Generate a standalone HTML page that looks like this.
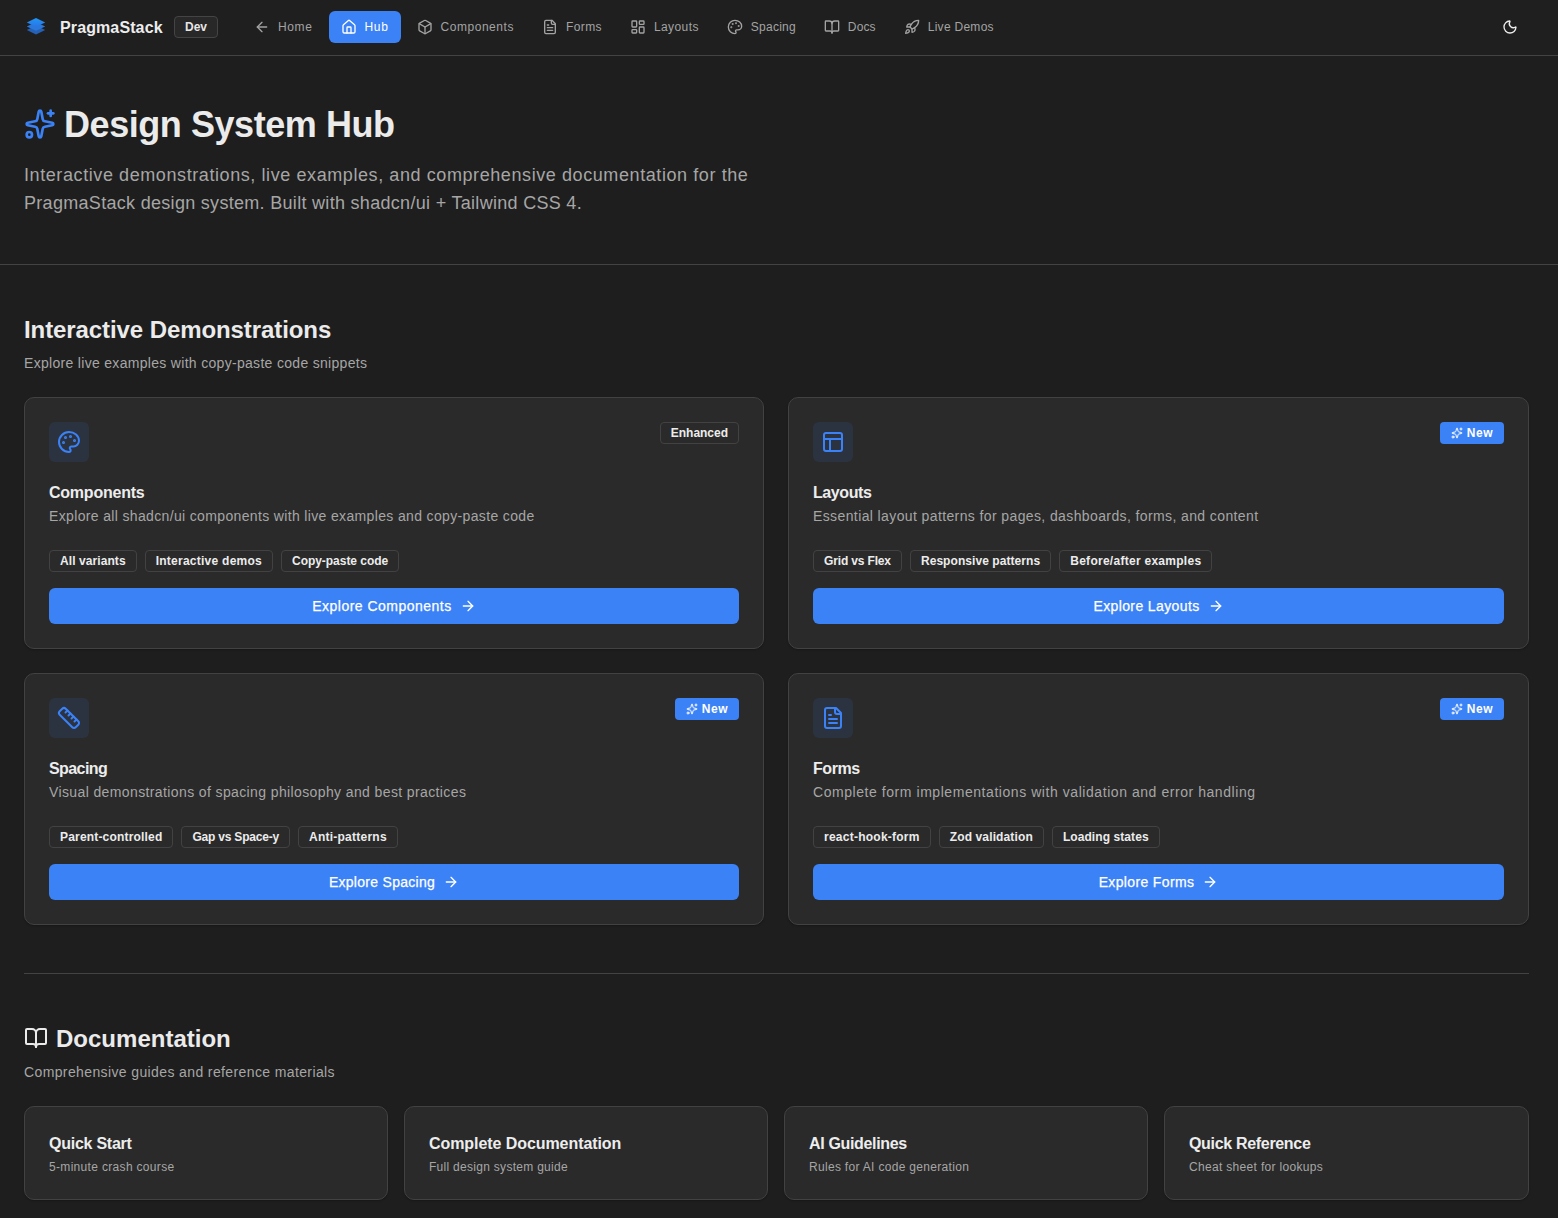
<!DOCTYPE html>
<html><head><meta charset="utf-8">
<style>
*{box-sizing:border-box;margin:0;padding:0}
html,body{width:1558px;height:1218px;overflow:hidden;background:#1e1e1e}
body{font-family:"Liberation Sans",sans-serif;color:#ececec;position:relative}
.t{white-space:nowrap;display:inline-block}
svg.i{display:block;fill:none;stroke:currentColor;stroke-width:2;stroke-linecap:round;stroke-linejoin:round}
.abs{position:absolute}
/* header */
.hdr{position:absolute;left:0;top:0;width:1558px;height:56px;border-bottom:1px solid #434343;background:#1f1f1f}
.brand{position:absolute;left:60px;top:15px;font-size:16px;font-weight:600;line-height:24px;color:#ededed}
.dev{position:absolute;left:174px;top:16px;width:44px;height:22px;border:1px solid #444;border-radius:4px;background:#282828;display:flex;align-items:center;justify-content:center}
.dev .t{font-size:12px;font-weight:600;line-height:16px;color:#e6e6e6}
.nav{position:absolute;left:242px;top:11px;height:32px;display:flex;gap:4px}
.ni{display:flex;align-items:center;gap:8px;height:32px;padding:0 12px;border-radius:6px;color:#a3a3a3}
.ni .t{font-size:12px;font-weight:500;line-height:16px}
.ni.on{background:#3b82f6;color:#fff}
.moon{position:absolute;left:1502px;top:19px;color:#ececec}
/* hero */
.hero{position:absolute;left:0;top:56px;width:1558px;height:209px;border-bottom:1px solid #434343}
.h1row{position:absolute;left:24px;top:48px;height:40px;display:flex;align-items:center;gap:8px}
.h1row svg{color:#3b82f6}
.h1{font-size:36px;font-weight:700;line-height:40px;letter-spacing:-0.025em;color:#ebebeb}
.lead{position:absolute;left:24px;top:104px;font-size:18px;line-height:28px;color:#a6a6a6}
/* sections */
.sec-h{position:absolute;left:24px;font-size:24px;font-weight:600;line-height:32px;letter-spacing:-0.025em;color:#ebebeb}
.sec-p{position:absolute;left:24px;font-size:14px;line-height:20px;color:#a6a6a6}
.card{position:absolute;width:741px;height:252px;border:1px solid #424242;border-radius:10px;background:#2a2a2a;box-shadow:0 1px 2px rgba(0,0,0,.25)}
.card .ib{position:absolute;left:24px;top:24px;width:40px;height:40px;border-radius:6px;background:#2c3340;padding:8px;color:#3b82f6}
.card .bdg{position:absolute;right:24px;top:24px;height:22px;border-radius:4px;display:flex;align-items:center;gap:4px;padding:0 10px}
.bdg .t{font-size:12px;font-weight:600;line-height:16px}
.bdg.out{border:1px solid #424242;color:#ececec}
.bdg.new{background:#3b82f6;color:#fff;border:1px solid transparent}
.card .ttl{position:absolute;left:24px;top:80px;font-size:16px;font-weight:600;line-height:28px;letter-spacing:-0.025em;color:#ededed}
.card .dsc{position:absolute;left:24px;top:108px;font-size:14px;line-height:20px;color:#a6a6a6}
.card .tags{position:absolute;left:24px;top:152px;display:flex;gap:8px}
.tag{height:22px;border:1px solid #424242;border-radius:4px;padding:0 10px;display:flex;align-items:center;color:#ececec}
.tag .t{font-size:12px;font-weight:600;line-height:16px}
.card .btn{position:absolute;left:24px;top:190px;width:690px;height:36px;border-radius:6px;background:#3b82f6;color:#fff;display:flex;align-items:center;justify-content:center;gap:8px}
.btn .t{font-size:14px;font-weight:500;line-height:20px;-webkit-text-stroke:0.25px currentColor}
.sep{position:absolute;left:24px;top:973px;width:1505px;height:1px;background:#434343}
.dcard{position:absolute;top:1106px;width:364px;height:94px;border:1px solid #424242;border-radius:10px;background:#2a2a2a;box-shadow:0 1px 2px rgba(0,0,0,.25)}
.dcard .ttl{position:absolute;left:24px;top:24px;font-size:16px;font-weight:600;line-height:24px;letter-spacing:-0.025em;color:#ededed}
.dcard .dsc{position:absolute;left:24px;top:52px;font-size:12px;line-height:16px;color:#a6a6a6}
</style></head><body>

<div class="hdr">
  <svg class="abs" style="left:24px;top:14px" width="24" height="24" viewBox="0 0 24 24">
    <defs><linearGradient id="lg" x1="0" y1="0" x2="0" y2="1"><stop offset="0" stop-color="#1f97f6"></stop><stop offset="1" stop-color="#2a74e6"></stop></linearGradient></defs>
    <path d="M12 11.5 21.2 16 12 20.4 2.8 16Z" fill="#2660b4"></path>
    <path d="M12 7.9 21.2 12.4 12 16.8 2.8 12.4Z" fill="#2a78dc"></path>
    <path d="M12 3.9 21.2 8.4 12 12.8 2.8 8.4Z" fill="url(#lg)"></path>
  </svg>
  <span class="brand t" style="letter-spacing: 0.115px; transform: translateY(1px);">PragmaStack</span>
  <div class="dev"><span class="t" style="letter-spacing: 0.042px;">Dev</span></div>
  <div class="nav">
    <div class="ni"><svg class="i" width="16" height="16" viewBox="0 0 24 24"><path d="m12 19-7-7 7-7"></path><path d="M19 12H5"></path></svg><span class="t" style="letter-spacing: 0.637px;">Home</span></div>
    <div class="ni on"><svg class="i" width="16" height="16" viewBox="0 0 24 24"><path d="M15 21v-8a1 1 0 0 0-1-1h-4a1 1 0 0 0-1 1v8"></path><path d="M3 10a2 2 0 0 1 .709-1.528l7-5.999a2 2 0 0 1 2.582 0l7 5.999A2 2 0 0 1 21 10v9a2 2 0 0 1-2 2H5a2 2 0 0 1-2-2z"></path></svg><span class="t" style="letter-spacing: 0.646px;">Hub</span></div>
    <div class="ni"><svg class="i" width="16" height="16" viewBox="0 0 24 24"><path d="M21 8a2 2 0 0 0-1-1.730l-7-4a2 2 0 0 0-2 0l-7 4A2 2 0 0 0 3 8v8a2 2 0 0 0 1 1.73l7 4a2 2 0 0 0 2 0l7-4A2 2 0 0 0 21 16Z"></path><path d="m3.3 7 8.7 5 8.7-5"></path><path d="M12 22V12"></path></svg><span class="t" style="letter-spacing: 0.541px;">Components</span></div>
    <div class="ni"><svg class="i" width="16" height="16" viewBox="0 0 24 24"><path d="M15 2H6a2 2 0 0 0-2 2v16a2 2 0 0 0 2 2h12a2 2 0 0 0 2-2V7Z"></path><path d="M14 2v4a2 2 0 0 0 2 2h4"></path><path d="M10 9H8"></path><path d="M16 13H8"></path><path d="M16 17H8"></path></svg><span class="t" style="letter-spacing: 0.391px;">Forms</span></div>
    <div class="ni"><svg class="i" width="16" height="16" viewBox="0 0 24 24"><rect width="7" height="9" x="3" y="3" rx="1"></rect><rect width="7" height="5" x="14" y="3" rx="1"></rect><rect width="7" height="9" x="14" y="12" rx="1"></rect><rect width="7" height="5" x="3" y="16" rx="1"></rect></svg><span class="t" style="letter-spacing: 0.411px;">Layouts</span></div>
    <div class="ni"><svg class="i" width="16" height="16" viewBox="0 0 24 24"><circle cx="13.5" cy="6.5" r=".5" fill="currentColor"></circle><circle cx="17.5" cy="10.5" r=".5" fill="currentColor"></circle><circle cx="8.5" cy="7.5" r=".5" fill="currentColor"></circle><circle cx="6.5" cy="12.5" r=".5" fill="currentColor"></circle><path d="M12 2C6.5 2 2 6.5 2 12s4.5 10 10 10c.926 0 1.648-.746 1.648-1.688 0-.437-.18-.835-.437-1.125-.29-.289-.438-.652-.438-1.125a1.64 1.64 0 0 1 1.668-1.668h1.996c3.051 0 5.555-2.503 5.555-5.554C21.965 6.012 17.461 2 12 2z"></path></svg><span class="t" style="letter-spacing: 0.234px;">Spacing</span></div>
    <div class="ni"><svg class="i" width="16" height="16" viewBox="0 0 24 24"><path d="M12 7v14"></path><path d="M3 18a1 1 0 0 1-1-1V4a1 1 0 0 1 1-1h5a4 4 0 0 1 4 4 4 4 0 0 1 4-4h5a1 1 0 0 1 1 1v13a1 1 0 0 1-1 1h-6a3 3 0 0 0-3 3 3 3 0 0 0-3-3z"></path></svg><span class="t" style="letter-spacing: 0.125px;">Docs</span></div>
    <div class="ni"><svg class="i" width="16" height="16" viewBox="0 0 24 24"><path d="M4.5 16.5c-1.5 1.26-2 5-2 5s3.740-.5 5-2c.71-.84.7-2.13-.09-2.91a2.18 2.18 0 0 0-2.91-.09z"></path><path d="m12 15-3-3a22 22 0 0 1 2-3.95A12.88 12.88 0 0 1 22 2c0 2.72-.78 7.5-6 11a22.35 22.35 0 0 1-4 2z"></path><path d="M9 12H4s.55-3.03 2-4c1.62-1.08 5 0 5 0"></path><path d="M12 15v5s3.03-.55 4-2c1.08-1.62 0-5 0-5"></path></svg><span class="t" style="letter-spacing: 0.281px;">Live Demos</span></div>
  </div>
  <svg class="i moon" width="16" height="16" viewBox="0 0 24 24"><path d="M20.985 12.486a9 9 0 1 1-9.473-9.472c.405-.022.617.46.402.803a6 6 0 0 0 8.268 8.268c.344-.215.825-.004.803.401"></path></svg>
</div>

<div class="hero">
  <div class="h1row">
    <svg class="i" width="32" height="32" viewBox="0 0 24 24"><path d="M11.017 2.814a1 1 0 0 1 1.966 0l1.051 5.558a2 2 0 0 0 1.594 1.594l5.558 1.051a1 1 0 0 1 0 1.966l-5.558 1.051a2 2 0 0 0-1.594 1.594l-1.051 5.558a1 1 0 0 1-1.966 0l-1.051-5.558a2 2 0 0 0-1.594-1.594l-5.558-1.051a1 1 0 0 1 0-1.966l5.558-1.051a2 2 0 0 0 1.594-1.594z"></path><path d="M20 2v4"></path><path d="M22 4h-4"></path><circle cx="4" cy="20" r="2"></circle></svg>
    <span class="t h1" style="letter-spacing: -0.439px; transform: translateY(1px);">Design System Hub</span>
  </div>
  <div class="lead"><div><span class="t" style="letter-spacing: 0.586px; transform: translateY(1px);">Interactive demonstrations, live examples, and comprehensive documentation for the</span></div><div><span class="t" style="letter-spacing: 0.301px; transform: translateY(1px);">PragmaStack design system. Built with shadcn/ui + Tailwind CSS 4.</span></div></div>
</div>

<span class="t sec-h" style="top: 313px; letter-spacing: -0.087px; transform: translateY(1px);">Interactive Demonstrations</span>
<span class="t sec-p" style="top: 353px; letter-spacing: 0.307px;">Explore live examples with copy-paste code snippets</span>

<div class="card" style="left:24px;top:397px;width:740px">
  <div class="ib"><svg class="i" width="24" height="24" viewBox="0 0 24 24"><circle cx="13.5" cy="6.5" r=".5" fill="currentColor"></circle><circle cx="17.5" cy="10.5" r=".5" fill="currentColor"></circle><circle cx="8.5" cy="7.5" r=".5" fill="currentColor"></circle><circle cx="6.5" cy="12.5" r=".5" fill="currentColor"></circle><path d="M12 2C6.5 2 2 6.5 2 12s4.5 10 10 10c.926 0 1.648-.746 1.648-1.688 0-.437-.18-.835-.437-1.125-.29-.289-.438-.652-.438-1.125a1.64 1.64 0 0 1 1.668-1.668h1.996c3.051 0 5.555-2.503 5.555-5.554C21.965 6.012 17.461 2 12 2z"></path></svg></div>
  <div class="bdg out"><span class="t" style="letter-spacing: -0.014px;">Enhanced</span></div>
  <span class="t ttl" style="letter-spacing: -0.228px; transform: translateY(1px);">Components</span>
  <span class="t dsc" style="letter-spacing: 0.35px;">Explore all shadcn/ui components with live examples and copy-paste code</span>
  <div class="tags"><div class="tag"><span class="t" style="letter-spacing: 0.078px;">All variants</span></div><div class="tag"><span class="t" style="letter-spacing: 0.254px;">Interactive demos</span></div><div class="tag"><span class="t" style="letter-spacing: -0.034px;">Copy-paste code</span></div></div>
  <div class="btn" style="width:auto;right:24px"><span class="t" style="letter-spacing: 0.483px;">Explore Components</span><svg class="i" width="16" height="16" viewBox="0 0 24 24"><path d="M5 12h14"></path><path d="m12 5 7 7-7 7"></path></svg></div>
</div>
<div class="card" style="left:788px;top:397px;width:741px">
  <div class="ib"><svg class="i" width="24" height="24" viewBox="0 0 24 24"><rect width="18" height="18" x="3" y="3" rx="2"></rect><path d="M3 9h18"></path><path d="M9 21V9"></path></svg></div>
  <div class="bdg new"><svg class="i" width="12" height="12" viewBox="0 0 24 24"><path d="M11.017 2.814a1 1 0 0 1 1.966 0l1.051 5.558a2 2 0 0 0 1.594 1.594l5.558 1.051a1 1 0 0 1 0 1.966l-5.558 1.051a2 2 0 0 0-1.594 1.594l-1.051 5.558a1 1 0 0 1-1.966 0l-1.051-5.558a2 2 0 0 0-1.594-1.594l-5.558-1.051a1 1 0 0 1 0-1.966l5.558-1.051a2 2 0 0 0 1.594-1.594z"></path><path d="M20 2v4"></path><path d="M22 4h-4"></path><circle cx="4" cy="20" r="2"></circle></svg><span class="t" style="letter-spacing: 0.526px;">New</span></div>
  <span class="t ttl" style="letter-spacing: -0.402px; transform: translateY(1px);">Layouts</span>
  <span class="t dsc" style="letter-spacing: 0.388px;">Essential layout patterns for pages, dashboards, forms, and content</span>
  <div class="tags"><div class="tag"><span class="t" style="letter-spacing: -0.15px;">Grid vs Flex</span></div><div class="tag"><span class="t" style="letter-spacing: 0.067px;">Responsive patterns</span></div><div class="tag"><span class="t" style="letter-spacing: 0.274px;">Before/after examples</span></div></div>
  <div class="btn" style="width:auto;right:24px"><span class="t" style="letter-spacing: 0.38px;">Explore Layouts</span><svg class="i" width="16" height="16" viewBox="0 0 24 24"><path d="M5 12h14"></path><path d="m12 5 7 7-7 7"></path></svg></div>
</div>
<div class="card" style="left:24px;top:673px;width:740px">
  <div class="ib"><svg class="i" width="24" height="24" viewBox="0 0 24 24"><path d="M21.3 15.3a2.4 2.4 0 0 1 0 3.4l-2.6 2.6a2.4 2.4 0 0 1-3.4 0L2.7 8.7a2.41 2.41 0 0 1 0-3.4l2.6-2.6a2.41 2.41 0 0 1 3.4 0Z"></path><path d="m14.5 12.5 2-2"></path><path d="m11.5 9.5 2-2"></path><path d="m8.5 6.5 2-2"></path><path d="m17.5 15.5 2-2"></path></svg></div>
  <div class="bdg new"><svg class="i" width="12" height="12" viewBox="0 0 24 24"><path d="M11.017 2.814a1 1 0 0 1 1.966 0l1.051 5.558a2 2 0 0 0 1.594 1.594l5.558 1.051a1 1 0 0 1 0 1.966l-5.558 1.051a2 2 0 0 0-1.594 1.594l-1.051 5.558a1 1 0 0 1-1.966 0l-1.051-5.558a2 2 0 0 0-1.594-1.594l-5.558-1.051a1 1 0 0 1 0-1.966l5.558-1.051a2 2 0 0 0 1.594-1.594z"></path><path d="M20 2v4"></path><path d="M22 4h-4"></path><circle cx="4" cy="20" r="2"></circle></svg><span class="t" style="letter-spacing: 0.526px;">New</span></div>
  <span class="t ttl" style="letter-spacing: -0.58px; transform: translateY(1px);">Spacing</span>
  <span class="t dsc" style="letter-spacing: 0.383px;">Visual demonstrations of spacing philosophy and best practices</span>
  <div class="tags"><div class="tag"><span class="t" style="letter-spacing: 0.18px;">Parent-controlled</span></div><div class="tag"><span class="t" style="letter-spacing: -0.202px;">Gap vs Space-y</span></div><div class="tag"><span class="t" style="letter-spacing: 0.249px;">Anti-patterns</span></div></div>
  <div class="btn" style="width:auto;right:24px"><span class="t" style="letter-spacing: 0.285px;">Explore Spacing</span><svg class="i" width="16" height="16" viewBox="0 0 24 24"><path d="M5 12h14"></path><path d="m12 5 7 7-7 7"></path></svg></div>
</div>
<div class="card" style="left:788px;top:673px;width:741px">
  <div class="ib"><svg class="i" width="24" height="24" viewBox="0 0 24 24"><path d="M15 2H6a2 2 0 0 0-2 2v16a2 2 0 0 0 2 2h12a2 2 0 0 0 2-2V7Z"></path><path d="M14 2v4a2 2 0 0 0 2 2h4"></path><path d="M10 9H8"></path><path d="M16 13H8"></path><path d="M16 17H8"></path></svg></div>
  <div class="bdg new"><svg class="i" width="12" height="12" viewBox="0 0 24 24"><path d="M11.017 2.814a1 1 0 0 1 1.966 0l1.051 5.558a2 2 0 0 0 1.594 1.594l5.558 1.051a1 1 0 0 1 0 1.966l-5.558 1.051a2 2 0 0 0-1.594 1.594l-1.051 5.558a1 1 0 0 1-1.966 0l-1.051-5.558a2 2 0 0 0-1.594-1.594l-5.558-1.051a1 1 0 0 1 0-1.966l5.558-1.051a2 2 0 0 0 1.594-1.594z"></path><path d="M20 2v4"></path><path d="M22 4h-4"></path><circle cx="4" cy="20" r="2"></circle></svg><span class="t" style="letter-spacing: 0.526px;">New</span></div>
  <span class="t ttl" style="letter-spacing: -0.444px; transform: translateY(1px);">Forms</span>
  <span class="t dsc" style="letter-spacing: 0.556px;">Complete form implementations with validation and error handling</span>
  <div class="tags"><div class="tag"><span class="t" style="letter-spacing: 0.246px;">react-hook-form</span></div><div class="tag"><span class="t" style="letter-spacing: 0.132px;">Zod validation</span></div><div class="tag"><span class="t" style="letter-spacing: 0.079px;">Loading states</span></div></div>
  <div class="btn" style="width:auto;right:24px"><span class="t" style="letter-spacing: 0.357px;">Explore Forms</span><svg class="i" width="16" height="16" viewBox="0 0 24 24"><path d="M5 12h14"></path><path d="m12 5 7 7-7 7"></path></svg></div>
</div>

<div class="sep"></div>

<div class="abs" style="left:24px;top:1022px;height:32px;display:flex;align-items:center;gap:8px;color:#ebebeb">
  <svg class="i" width="24" height="24" viewBox="0 0 24 24"><path d="M12 7v14"></path><path d="M3 18a1 1 0 0 1-1-1V4a1 1 0 0 1 1-1h5a4 4 0 0 1 4 4 4 4 0 0 1 4-4h5a1 1 0 0 1 1 1v13a1 1 0 0 1-1 1h-6a3 3 0 0 0-3 3 3 3 0 0 0-3-3z"></path></svg>
  <span class="t sec-h" style="position: static; letter-spacing: 0.008px; transform: translateY(1px);">Documentation</span>
</div>
<span class="t sec-p" style="top: 1062px; letter-spacing: 0.381px;">Comprehensive guides and reference materials</span>

<div class="dcard" style="left:24px"><span class="t ttl" style="letter-spacing: -0.249px; transform: translateY(1px);">Quick Start</span><span class="t dsc" style="letter-spacing: 0.323px;">5-minute crash course</span></div>
<div class="dcard" style="left:404px"><span class="t ttl" style="letter-spacing: -0.069px; transform: translateY(1px);">Complete Documentation</span><span class="t dsc" style="letter-spacing: 0.287px;">Full design system guide</span></div>
<div class="dcard" style="left:784px"><span class="t ttl" style="letter-spacing: -0.337px; transform: translateY(1px);">AI Guidelines</span><span class="t dsc" style="letter-spacing: 0.31px;">Rules for AI code generation</span></div>
<div class="dcard" style="left:1164px;width:365px"><span class="t ttl" style="letter-spacing: -0.321px; transform: translateY(1px);">Quick Reference</span><span class="t dsc" style="letter-spacing: 0.321px;">Cheat sheet for lookups</span></div>


</body></html>
